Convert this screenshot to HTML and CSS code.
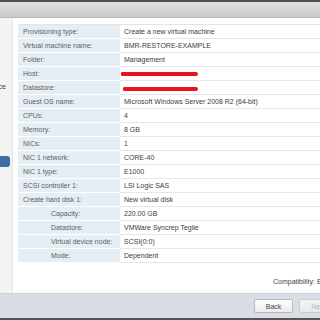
FILE: index.html
```html
<!DOCTYPE html>
<html lang="en">
<head>
    <meta charset="UTF-8">
    <title>New Virtual Machine - Ready to complete</title>
    <link rel="stylesheet" href="styles.css">
</head>
<body>
    <div class="window">
        <div class="titlebar"></div>

        <div class="wizard">
            <!-- Step list (mostly cut off on the left) -->
            <nav class="steps">
                <div class="step">Select compute resource</div>
                <div class="step active" title="Ready to complete"></div>
            </nav>

            <div class="content">
                <table class="summary">
                    <tr><td class="key">Provisioning type:</td><td class="val">Create a new virtual machine</td></tr>
                    <tr><td class="key">Virtual machine name:</td><td class="val">BMR-RESTORE-EXAMPLE</td></tr>
                    <tr><td class="key">Folder:</td><td class="val">Management</td></tr>
                    <tr><td class="key">Host:</td><td class="val redacted"><span class="scribble scribble-1"></span></td></tr>
                    <tr><td class="key">Datastore:</td><td class="val redacted"><span class="scribble scribble-2"></span></td></tr>
                    <tr><td class="key">Guest OS name:</td><td class="val">Microsoft Windows Server 2008 R2 (64-bit)</td></tr>
                    <tr><td class="key">CPUs:</td><td class="val">4</td></tr>
                    <tr><td class="key">Memory:</td><td class="val">8 GB</td></tr>
                    <tr><td class="key">NICs:</td><td class="val">1</td></tr>
                    <tr><td class="key">NIC 1 network:</td><td class="val">CORE-40</td></tr>
                    <tr><td class="key">NIC 1 type:</td><td class="val">E1000</td></tr>
                    <tr><td class="key">SCSI controller 1:</td><td class="val">LSI Logic SAS</td></tr>
                    <tr><td class="key">Create hard disk 1:</td><td class="val">New virtual disk</td></tr>
                    <tr><td class="key sub">Capacity:</td><td class="val">220.00 GB</td></tr>
                    <tr><td class="key sub">Datastore:</td><td class="val">VMWare Syncrep Tegile</td></tr>
                    <tr><td class="key sub">Virtual device node:</td><td class="val">SCSI(0:0)</td></tr>
                    <tr><td class="key sub">Mode:</td><td class="val">Dependent</td></tr>
                </table>

                <p class="compat">Compatibility: ESXi 5.5 and later (VM version 10)</p>
            </div>
        </div>

        <div class="footer">
            <button class="btn">Back</button>
            <button class="btn" disabled>Next</button>
            <button class="btn">Finish</button>
        </div>
    </div>
</body>
</html>
```

FILE: styles.css
```css
* {
    margin: 0;
    padding: 0;
    box-sizing: border-box;
}

body {
    width: 320px;
    height: 320px;
    overflow: hidden;
    font-family: 'Liberation Sans', Arial, sans-serif;
    font-size: 7px;
    color: #444;
    background: #fff;
}

.window {
    display: flex;
    flex-direction: column;
    width: 320px;
    height: 320px;
    overflow: hidden;
    border-bottom: 2px solid #555;
}

.titlebar {
    height: 18px;
    flex-shrink: 0;
    border-top: 2px solid #4e4e4e;
    border-bottom: 1px solid #b9b9b9;
    background: linear-gradient(#e0e0e0, #c9c9cb);
}

.wizard {
    flex: 1;
    display: flex;
    min-height: 0;
}

/* left step list */
.steps {
    width: 13px;
    flex-shrink: 0;
    background: #f3f3f3;
    border-right: 1px solid #e6e6e6;
    overflow: hidden;
    padding-top: 63px;
    display: flex;
    flex-direction: column;
    align-items: flex-end;
}

.step {
    white-space: nowrap;
    height: 11px;
    line-height: 11px;
    padding-right: 6px;
    color: #444;
}

.step.active {
    margin-top: 64px;
    width: 10px;
    padding: 0;
    align-self: flex-start;
    background: #3d6ea3;
    border-radius: 0 3px 3px 0;
}

.content {
    flex: 1;
    padding: 6px 0 0 5px;
    overflow: hidden;
}

.summary {
    width: 420px;
    border-collapse: collapse;
    border-top: 1px solid #e4e4e4;
}

.summary td {
    height: 14px;
    padding: 0 4px;
    white-space: nowrap;
    vertical-align: middle;
}

.key {
    width: 102px;
    padding-left: 5px !important;
    background: #e6eef5;
    border-bottom: 1px solid #fff;
    color: #606060;
}

.key.sub {
    padding-left: 33px !important;
}

.val {
    border-bottom: 1px solid #e6e6e6;
    color: #3c3c3c;
}

.redacted {
    position: relative;
}

.scribble {
    position: absolute;
    left: 1px;
    top: 5px;
    width: 77px;
    height: 4px;
    background: #e8141c;
    border-radius: 2px 3px 3px 2px;
}

.scribble-2 {
    left: 3px;
    width: 75px;
    top: 6px;
}

.compat {
    padding: 15px 0 0 255px;
    white-space: nowrap;
    color: #444;
}

.footer {
    height: 25px;
    flex-shrink: 0;
    background: #d9dde5;
    border-top: 1px solid #cfd3da;
    display: flex;
    gap: 6px;
    padding: 5px 0 0 254px;
    white-space: nowrap;
}

.btn {
    flex-shrink: 0;
    width: 39px;
    height: 14px;
    font-family: inherit;
    font-size: 7px;
    color: #444;
    background: linear-gradient(#fdfdfd, #ececec);
    border: 1px solid #b7b9bd;
    border-radius: 2px;
}

.btn:disabled {
    color: #b5b8bd;
    background: linear-gradient(#f2f3f5, #e6e8ec);
    border-color: #c9ccd2;
}
```
